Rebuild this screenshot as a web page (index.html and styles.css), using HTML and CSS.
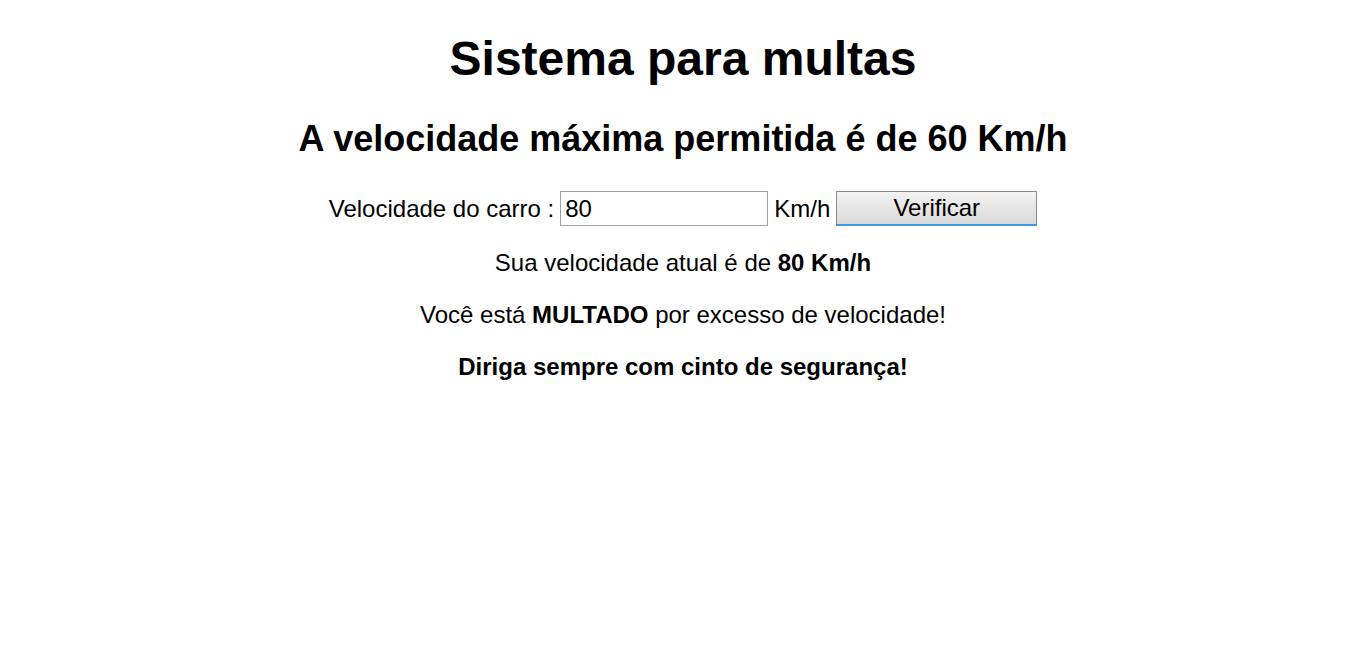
FILE: index.html
```html
<!DOCTYPE html>
<html lang="pt-BR">
<head>
<meta charset="utf-8">
<title>Sistema para multas</title>
<link rel="stylesheet" href="styles.css">
</head>
<body>
<main class="page">
  <h1 class="title">Sistema para multas</h1>
  <h2 class="subtitle">A velocidade máxima permitida é de 60 Km/h</h2>
  <form class="form">
    <label class="label" for="vel">Velocidade do carro :</label>
    <input class="field" id="vel" type="text" value="80">
    <span class="unit">Km/h</span>
    <button class="btn" type="button">Verificar</button>
  </form>
  <p class="line line-first">Sua velocidade atual é de <strong>80 Km/h</strong></p>
  <p class="line">Você está <strong>MULTADO</strong> por excesso de velocidade!</p>
  <p class="line"><strong>Diriga sempre com cinto de segurança!</strong></p>
</main>
</body>
</html>
```

FILE: styles.css
```css
html, body {
  margin: 0;
  padding: 0;
  background: #fff;
}
body {
  font-family: "Liberation Sans", Arial, sans-serif;
  font-size: 24px;
  color: #000;
}
.page {
  padding-top: 31px;
  text-align: center;
}
.title {
  font-size: 48px;
  font-weight: bold;
  margin: 0 0 32px;
}
.subtitle {
  font-size: 36px;
  font-weight: bold;
  margin: 0 0 31px;
}
.form {
  display: flex;
  justify-content: center;
  align-items: center;
  gap: 6px;
  margin: 0;
}
.label, .unit {
  line-height: 1;
}
.field {
  width: 208px;
  height: 35px;
  box-sizing: border-box;
  border: 1px solid #a0a0a0;
  font-family: inherit;
  font-size: 24px;
  padding: 0 4px;
  margin: 0;
  color: #000;
}
.btn {
  width: 201px;
  height: 35px;
  box-sizing: border-box;
  border: 1px solid #8a8a8a;
  border-bottom: 2px solid #3c9be6;
  background: linear-gradient(#f2f2f2, #e6e6e6 50%, #dadada);
  font-family: inherit;
  font-size: 24px;
  color: #000;
  margin: 0;
  padding: 0;
}
.line {
  margin: 24px 0;
}
.line-first {
  margin-top: 23px;
}
```
